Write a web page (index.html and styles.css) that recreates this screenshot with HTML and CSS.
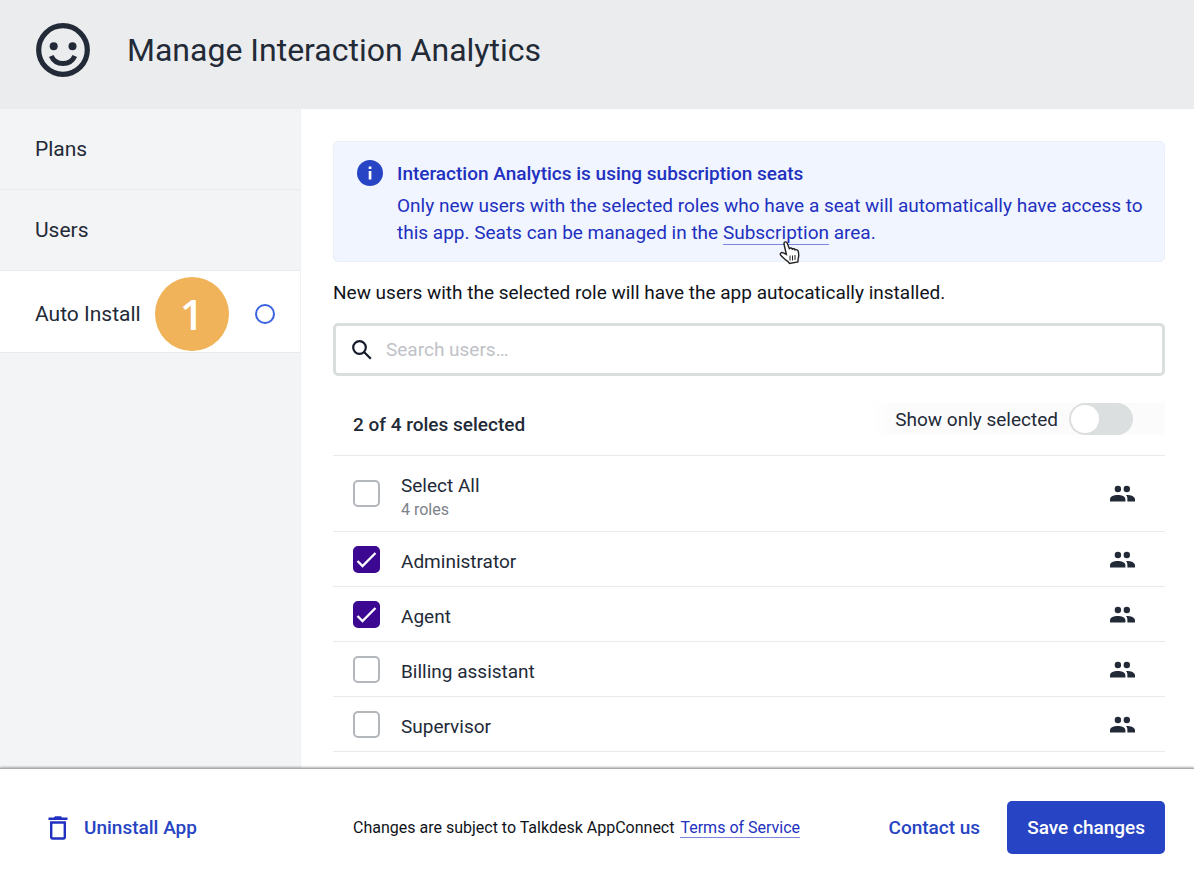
FILE: index.html
```html
<!DOCTYPE html>
<html lang="en">
<head>
    <meta charset="UTF-8">
    <meta name="viewport" content="width=device-width, initial-scale=1.0">
    <title>Manage Interaction Analytics</title>
    <link rel="stylesheet" href="styles.css">
</head>
<body>
    <!-- Icon shared by the role rows -->
    <svg class="sprite" aria-hidden="true">
        <symbol id="people" viewBox="0 0 25 17">
            <circle cx="7.9" cy="4" r="3.200"/>
            <circle cx="16.800" cy="4" r="3.200"/>
            <path d="M0 16.500v-2.300c0-3 4.200-4.300 7.700-4.300s7.700 1.300 7.700 4.300v2.300z"/>
            <path d="M16 9.900c4.600-.1 9 1.300 9 4.300v2.300h-7.600v-2.300c0-1.800-.2-3.200-1.400-4.300z"/>
        </symbol>
    </svg>

    <header class="header">
        <svg class="logo" viewBox="0 0 54 54" aria-hidden="true">
            <circle cx="27" cy="27" r="24.300" fill="none" stroke="#232a37" stroke-width="5.200"/>
            <circle cx="17.700" cy="23.300" r="4"/>
            <circle cx="36.500" cy="23.300" r="4"/>
            <path d="M15.200 33c2.300 5 6.500 7.600 11.800 7.600s9.500-2.600 11.800-7.600" fill="none" stroke="#232a37" stroke-width="5"/>
        </svg>
        <h1>Manage Interaction Analytics</h1>
    </header>

    <div class="content">
        <!-- Sidebar -->
        <nav class="sidebar">
            <a href="#plans">Plans</a>
            <a href="#users">Users</a>
            <a href="#auto-install" class="active">
                Auto Install
                <span class="step">1</span>
                <span class="ring"></span>
            </a>
        </nav>

        <main>
            <!-- Notice -->
            <section class="notice">
                <svg class="info" viewBox="0 0 26 26" aria-hidden="true">
                    <circle cx="13" cy="13" r="13" fill="#2744c4"/>
                    <path d="M11.700 6.500h2.700v2.500h-2.700zM11.700 11h2.700v8.500h-2.700z" fill="#fff"/>
                </svg>
                <div>
                    <h2>Interaction Analytics is using subscription seats</h2>
                    <p>Only new users with the selected roles who have a seat will automatically have access to this app. Seats can be managed in the <a href="#subscription" class="link pointed">Subscription<svg class="hand" viewBox="0 0 22 24" aria-hidden="true"><path d="M5 3c-.4-2.300 2.500-3 3.300-.8l2 5.300c1-1 2.700-.6 3 .6 1-.8 2.500-.4 2.800.8 1.200-.6 2.800 0 3.200 1.500.8 4 .6 5.500-.2 7.600l-.2 3-8.400 1.500-1.500-2C6.500 19 4.500 17 1.700 14.200.5 12.300 2.500 10.800 4.400 12l3 1.500z"/><path class="lines" d="M11 14.500v5M13.500 14.500v5M16 14v5"/></svg></a> area.</p>
                </div>
            </section>

            <p class="intro">New users with the selected role will have the app autocatically installed.</p>

            <!-- Search -->
            <label class="search">
                <svg viewBox="0 0 20 20" aria-label="Search users">
                    <circle cx="7.500" cy="7.500" r="6.300"/>
                    <path d="M12 12l6.800 6.800"/>
                </svg>
                <input type="search" placeholder="Search users…">
            </label>

            <!-- Roles -->
            <div class="toolbar">
                <strong>2 of 4 roles selected</strong>
                <label class="toggle">
                    Show only selected
                    <input type="checkbox" role="switch">
                </label>
            </div>

            <ul class="roles">
                <li class="all">
                    <input type="checkbox" id="selectAll">
                    <label for="selectAll">Select All <small>4 roles</small></label>
                    <svg><use href="#people"/></svg>
                </li>
                <li>
                    <input type="checkbox" id="administrator" checked>
                    <label for="administrator">Administrator</label>
                    <svg><use href="#people"/></svg>
                </li>
                <li>
                    <input type="checkbox" id="agent" checked>
                    <label for="agent">Agent</label>
                    <svg><use href="#people"/></svg>
                </li>
                <li>
                    <input type="checkbox" id="billing">
                    <label for="billing">Billing assistant</label>
                    <svg><use href="#people"/></svg>
                </li>
                <li>
                    <input type="checkbox" id="supervisor">
                    <label for="supervisor">Supervisor</label>
                    <svg><use href="#people"/></svg>
                </li>
            </ul>
        </main>
    </div>

    <footer class="footer">
        <button type="button" class="text-button uninstall">
            <svg viewBox="0 0 20 24" aria-hidden="true">
                <path d="M.5 1.500h5.500l1-1.200h6l1 1.200h5.500v2.600H.5z"/>
                <path d="M3.200 6.500h13.600v14.800a1.200 1.200 0 0 1-1.200 1.200H4.400a1.200 1.200 0 0 1-1.200-1.200z" fill="none" stroke="#2230c0" stroke-width="2.400"/>
            </svg>
            Uninstall App
        </button>
        <p class="terms">Changes are subject to Talkdesk AppConnect <a href="#terms" class="link">Terms of Service</a></p>
        <a href="#contact" class="contact">Contact us</a>
        <button type="button" class="save">Save changes</button>
    </footer>
</body>
</html>
```
FILE: styles.css
```css
* {
    box-sizing: border-box;
}
body {
    font-family: Roboto, Arial, sans-serif;
    font-size: 19px;
    color: #232a37;
    background-color: #fff;
    margin: 0;
    min-height: 100vh;
    display: flex;
    flex-direction: column;
}
h1, h2, p, ul {
    margin: 0;
    padding: 0;
}
.sprite {
    display: none;
}

.header {
    display: flex;
    align-items: center;
    gap: 37px;
    padding: 23px 36px 32px;
    background-color: #ebecee;
}
.header h1 {
    font-size: 32px;
    font-weight: 400;
    line-height: 40px;
}
.logo {
    width: 54px;
    height: 54px;
    fill: #232a37;
}

.content {
    flex: 1;
    display: flex;
}
.sidebar {
    flex: 0 0 301px;
    background-color: #f3f4f6;
    border-right: 1px solid #eef0f4;
}
.sidebar a {
    display: flex;
    align-items: center;
    height: 81px;
    padding: 0 25px 0 35px;
    font-size: 21px;
    color: inherit;
    text-decoration: none;
    border-bottom: 1px solid #e9ebee;
}
.sidebar a.active {
    height: 82px;
    padding-top: 4px;
    background-color: #fff;
}
.step {
    width: 74px;
    height: 74px;
    margin-left: 14px;
    border-radius: 50%;
    background-color: #f0b359;
    color: #fff;
    font: 600 42px/74px "Open Sans", sans-serif;
    text-align: center;
}
.ring {
    width: 20px;
    height: 20px;
    margin-left: auto;
    border: 2px solid #3b62e0;
    border-radius: 50%;
}

main {
    flex: 1;
    padding: 32px 29px 16px 32px;
}
.notice {
    display: flex;
    gap: 14px;
    padding: 18px 14px 15px 23px;
    border: 1px solid #e9effb;
    border-radius: 5px;
    background-color: #f0f5ff;
    color: #2230c0;
}
.info {
    flex: none;
    width: 26px;
    height: 26px;
}
.notice h2 {
    font-size: 19px;
    font-weight: 500;
    line-height: 27px;
    margin-bottom: 5px;
}
.notice p {
    line-height: 27px;
}
.link {
    color: #2230c0;
    text-decoration: none;
    border-bottom: 1px solid #7a86dd;
}
.pointed {
    position: relative;
}
.hand {
    position: absolute;
    left: 56px;
    top: 20px;
    width: 22px;
    height: 24px;
    fill: #fff;
    stroke: #222;
    stroke-width: 1.4;
}
.hand .lines {
    stroke-width: 1;
}
.intro {
    margin: 17px 0;
    line-height: 27px;
    color: #10131a;
}

.search {
    display: flex;
    align-items: center;
    gap: 14px;
    height: 53px;
    padding: 0 16px;
    border: 3px solid #dadedf;
    border-radius: 5px;
}
.search svg {
    width: 20px;
    height: 20px;
    fill: none;
    stroke: #151b2b;
    stroke-width: 2.2;
}
.search input {
    flex: 1;
    border: 0;
    outline: 0;
    padding: 0;
    background: none;
    font: inherit;
}
.search input::placeholder {
    color: #bfc2c8;
}

.toolbar {
    display: flex;
    justify-content: space-between;
    height: 80px;
    padding-left: 20px;
    border-bottom: 1px solid #e9eaec;
}
.toolbar strong {
    font-weight: 500;
    line-height: 32px;
    margin-top: 33px;
}
.toggle {
    display: flex;
    align-items: center;
    gap: 11px;
    height: 32px;
    margin-top: 27px;
    padding: 0 32px 0 24px;
    background: linear-gradient(to right, #fff, #fbfbfb 24px);
}
.toggle input {
    appearance: none;
    width: 64px;
    height: 32px;
    margin: 0;
    padding: 2px;
    border-radius: 16px;
    background-color: #dcdfe0;
}
.toggle input::before {
    content: "";
    display: block;
    width: 28px;
    height: 28px;
    border-radius: 50%;
    background-color: #fff;
}
.toggle input:checked::before {
    margin-left: auto;
}

.roles {
    list-style: none;
}
.roles li {
    display: flex;
    align-items: center;
    gap: 21px;
    height: 55px;
    padding: 0 30px 0 20px;
    border-bottom: 1px solid #e9eaec;
}
.roles li.all {
    height: 76px;
}
.roles label {
    flex: 1;
    line-height: 26px;
    padding-top: 5px;
}
.roles small {
    display: block;
    font-size: 16px;
    line-height: 21px;
    color: #7d828b;
}
.roles svg {
    width: 25px;
    height: 17px;
    fill: #232a37;
}
.roles input {
    appearance: none;
    width: 27px;
    height: 27px;
    margin: 0;
    border: 2px solid #b3b6bb;
    border-radius: 5px;
}
.roles input:checked {
    border-color: #3d0891;
    background: #3d0891 url("data:image/svg+xml,%3Csvg xmlns='http://www.w3.org/2000/svg' viewBox='0 0 23 23'%3E%3Cpath d='M2.500 13l5 5L20.500 5' fill='none' stroke='white' stroke-width='2.300'/%3E%3C/svg%3E");
}

.footer {
    display: flex;
    align-items: center;
    padding: 32px 29px 32px 48px;
    border-top: 1px solid #aaa;
    box-shadow: 0 -1px 2px rgba(0, 0, 0, 0.3);
    background-color: #fff;
}
.text-button {
    display: flex;
    align-items: center;
    gap: 16px;
    border: 0;
    padding: 0;
    background: none;
    font: inherit;
    font-weight: 500;
    color: #2744c4;
    cursor: pointer;
}
.uninstall {
    width: 305px;
}
.text-button svg {
    width: 20px;
    height: 24px;
    fill: #2230c0;
}
.terms {
    flex: 1;
    font-size: 16px;
    color: #10131a;
}
.terms .link {
    margin-left: 2px;
}
.contact {
    margin-right: 27px;
    font-weight: 500;
    color: #2744c4;
    text-decoration: none;
}
.save {
    height: 53px;
    padding: 0 20px;
    border: 0;
    border-radius: 5px;
    background-color: #2744c4;
    color: #fff;
    font: inherit;
    font-weight: 500;
    cursor: pointer;
}
```
